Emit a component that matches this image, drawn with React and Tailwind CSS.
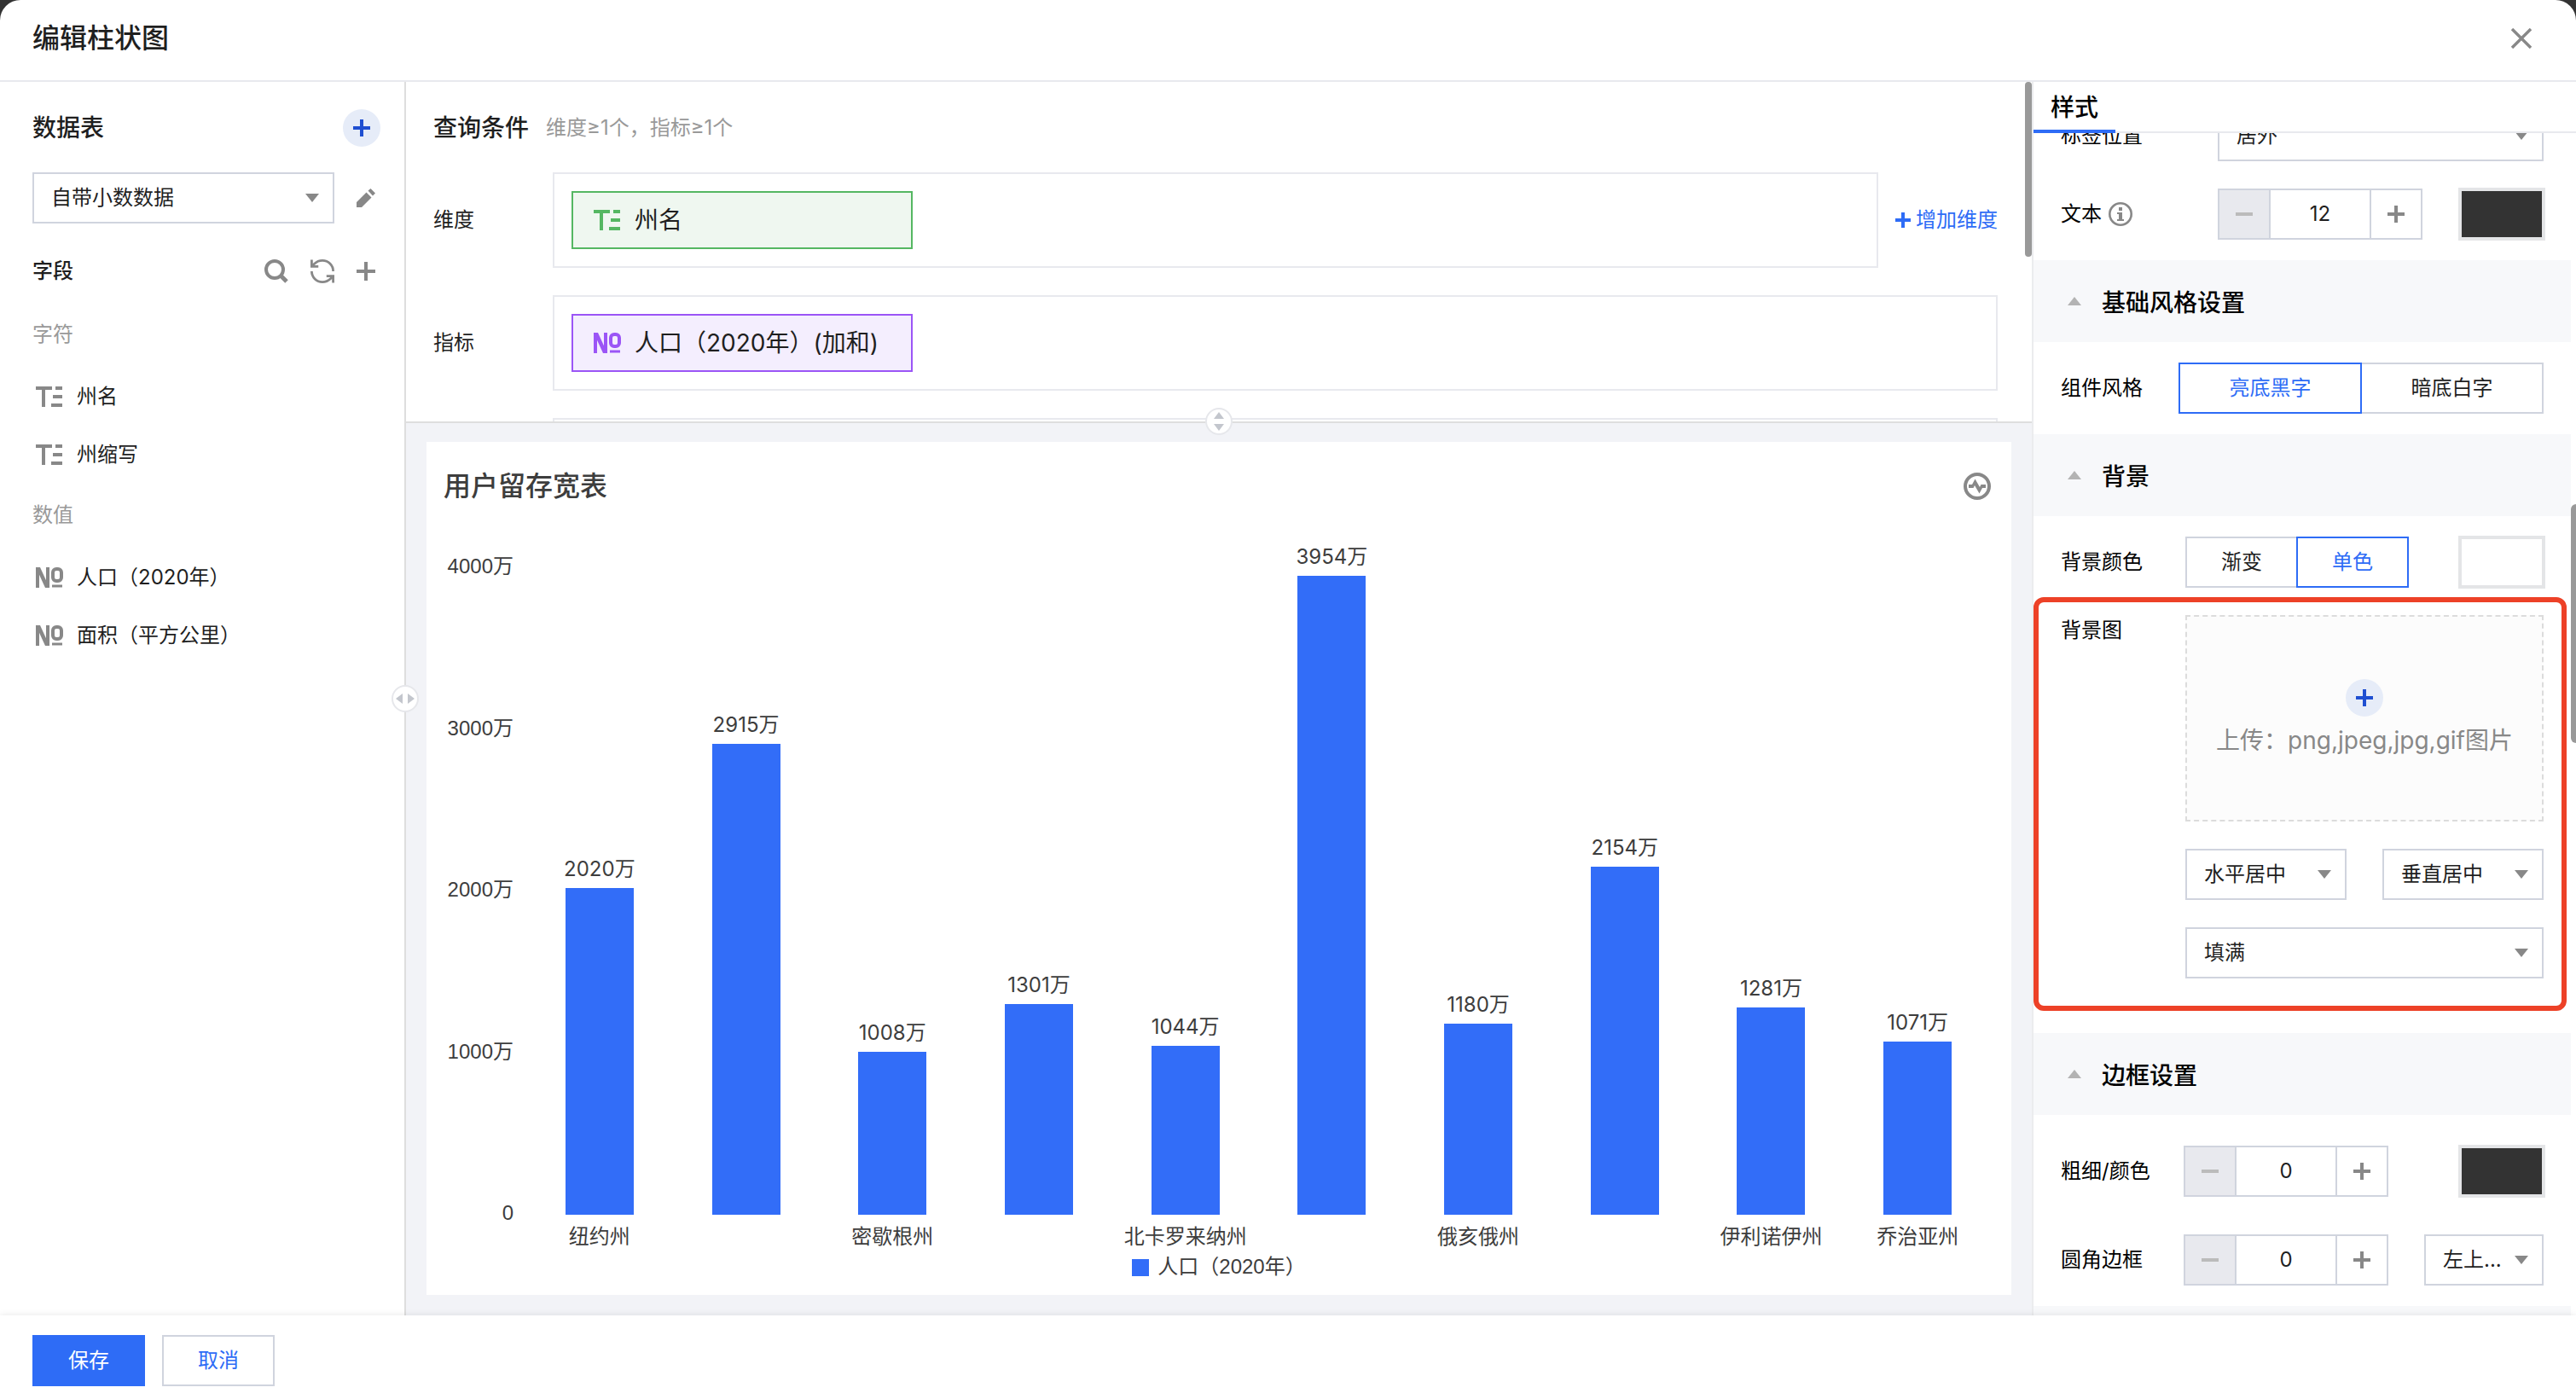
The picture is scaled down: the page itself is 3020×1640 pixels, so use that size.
import React, { useState } from "react";

const bars = [
  { name: "纽约州", value: 2020, showName: true },
  { name: "佛罗里达州", value: 2915, showName: false },
  { name: "密歇根州", value: 1008, showName: true },
  { name: "宾夕法尼亚州", value: 1301, showName: false },
  { name: "北卡罗来纳州", value: 1044, showName: true },
  { name: "加利福尼亚州", value: 3954, showName: false },
  { name: "俄亥俄州", value: 1180, showName: true },
  { name: "得克萨斯州", value: 2154, showName: false },
  { name: "伊利诺伊州", value: 1281, showName: true },
  { name: "乔治亚州", value: 1071, showName: true },
];

const AXIS_MAX = 4000;
const axisTicks = ["4000万", "3000万", "2000万", "1000万", "0"];

const TextFieldIcon = () => (
  <svg width="32" height="24" viewBox="0 0 32 24" fill="currentColor" aria-hidden="true">
    <path d="M0 0h19v4h-8v20H7V4H0zM23 0h8v4h-8zM20 10h11v4H20zM18 20h13v4H18z" />
  </svg>
);

const NumberFieldIcon = () => (
  <svg width="32" height="24" viewBox="0 0 32 24" fill="none" stroke="currentColor" aria-hidden="true">
    <path d="M2 24V0M14 24V0" strokeWidth="4" />
    <path d="M0 0h5l11 24h-5z" fill="currentColor" stroke="none" />
    <rect x="20" y="2" width="10" height="14" rx="4" strokeWidth="4" />
    <path d="M19 22h12" strokeWidth="3" />
  </svg>
);

const PlusIcon = ({ size = 22, weight = 4 }) => (
  <svg width={size} height={size} viewBox={`0 0 ${size} ${size}`} stroke="currentColor" strokeWidth={weight} aria-hidden="true">
    <path d={`M${size / 2} 0v${size}M0 ${size / 2}h${size}`} />
  </svg>
);

const MinusIcon = () => (
  <svg width="20" height="4" viewBox="0 0 20 4" fill="currentColor" aria-hidden="true">
    <path d="M0 0h20v4H0z" />
  </svg>
);

const SearchIcon = () => (
  <svg width="28" height="28" viewBox="0 0 28 28" fill="none" stroke="currentColor" aria-hidden="true">
    <circle cx="12" cy="12" r="10" strokeWidth="4" />
    <path d="M19 19l7 7" strokeWidth="5" />
  </svg>
);

const RefreshIcon = () => (
  <svg width="28" height="28" viewBox="2 2 20 20" fill="none" stroke="currentColor" strokeWidth="2" aria-hidden="true">
    <path d="M21 12a9 9 0 0 0-9-9 9.75 9.75 0 0 0-6.74 2.74L3.6 7.4M3 2.4V8h5.6" />
    <path d="M3 12a9 9 0 0 0 9 9 9.75 9.75 0 0 0 6.74-2.74L20.4 16.6M15.4 16H21v5.6" />
  </svg>
);

const PencilIcon = () => (
  <svg width="22" height="22" viewBox="0 0 22 22" fill="currentColor" aria-hidden="true">
    <path d="M0 16v6h6l11.500-11.500-6-6zM13.500 2.500 16.500 0 22 5.500l-3 3z" />
  </svg>
);

const InfoIcon = () => (
  <svg width="28" height="28" viewBox="0 0 28 28" className="text-[#888]" aria-hidden="true">
    <circle cx="14" cy="14" r="12.700" fill="none" stroke="currentColor" strokeWidth="2.600" />
    <path d="M12 6h4v4h-4zM10 12h6v8h2v2h-8v-2h2v-6h-2z" fill="currentColor" />
  </svg>
);

const PulseIcon = () => (
  <svg width="32" height="32" viewBox="0 0 32 32" aria-hidden="true">
    <circle cx="16" cy="16" r="14" fill="none" stroke="currentColor" strokeWidth="4" />
    <path d="M6 14h4l3.500-6.500L19 17l1.500-3H26v4h-4l-3.500 6.500L13 15l-1.500 3H6z" fill="currentColor" />
  </svg>
);

const AddCircle = () => (
  <span className="flex h-11 w-11 items-center justify-center rounded-full bg-[#e6ecf8] text-[#1f4fd1]">
    <PlusIcon size={20} weight={4} />
  </span>
);

const SelectBox = ({ id, label, options, className }) => (
  <div className={`relative ${className}`}>
    <select
      id={id}
      aria-label={label}
      className="h-[60px] w-full appearance-none border-2 border-[#d0d4de] bg-white pl-5 text-[#1f1f1f]"
    >
      {options.map((option) => (
        <option key={option}>{option}</option>
      ))}
    </select>
    <svg
      width="16"
      height="10"
      viewBox="0 0 16 10"
      className="pointer-events-none absolute top-1/2 right-[18px] -translate-y-1/2 text-[#888]"
      aria-hidden="true"
    >
      <path d="M0 0h16L8 10z" fill="currentColor" />
    </svg>
  </div>
);

const Stepper = ({ id, value, onChange }) => (
  <div className="flex h-[60px] w-[240px] border-2 border-[#d0d4de] bg-white">
    <button
      aria-label="减少"
      onClick={() => onChange(value - 1)}
      className="flex w-[60px] items-center justify-center border-r-2 border-[#d0d4de] bg-[#e8e9ee] text-[#bbb]"
    >
      <MinusIcon />
    </button>
    <input
      id={id}
      value={value}
      inputMode="numeric"
      onChange={(e) => onChange(Number(e.target.value) || 0)}
      className="w-0 flex-1 text-center text-[#1f1f1f]"
    />
    <button
      aria-label="增加"
      onClick={() => onChange(value + 1)}
      className="flex w-[60px] items-center justify-center border-l-2 border-[#d0d4de] text-[#888]"
    >
      <PlusIcon size={20} weight={4} />
    </button>
  </div>
);

const ColorBox = ({ label, value, onChange }) => (
  <input
    type="color"
    aria-label={label}
    value={value}
    onChange={(e) => onChange(e.target.value)}
    className="-mr-0.5 h-[62px] w-[102px] appearance-none border-4 border-[#e4e5e7] bg-white p-0 [&::-webkit-color-swatch-wrapper]:p-0 [&::-webkit-color-swatch]:rounded-none [&::-webkit-color-swatch]:border-0"
  />
);

const Segmented = ({ options, value, onChange, label, className }) => (
  <div role="group" aria-label={label} className={`flex h-[60px] ${className}`}>
    {options.map((option) => (
      <button
        key={option}
        aria-pressed={value === option}
        onClick={() => onChange(option)}
        className={
          value === option
            ? "relative flex-1 border-2 border-[#2e6cf6] text-[#2e6cf6] first:-mr-px last:-ml-px"
            : "flex-1 border-2 border-[#d0d4de] text-[#1f1f1f] first:-mr-px last:-ml-px"
        }
      >
        {option}
      </button>
    ))}
  </div>
);

const SectionHeader = ({ title }) => (
  <button className="flex h-24 w-full shrink-0 items-center gap-6 bg-[#f7f8fa] pl-10 text-[28px] font-medium text-black">
    <svg width="16" height="10" viewBox="0 0 16 10" aria-hidden="true">
      <path d="M0 10h16L8 0z" fill="#b3b3b3" />
    </svg>
    <span className="pt-1">{title}</span>
  </button>
);

const StyleRow = ({ label, htmlFor, icon, children }) => (
  <div className="flex h-[60px] items-center justify-between pr-8 pl-8 text-black">
    <label htmlFor={htmlFor} className="flex items-center gap-2">
      {label}
      {icon}
    </label>
    {children}
  </div>
);

const FieldGroup = ({ title, fields, icon }) => (
  <section>
    <h3 className="mb-[23px] h-8 text-[#999]">{title}</h3>
    <ul>
      {fields.map((field) => (
        <li key={field} className="flex h-[68px] items-center gap-4 pl-1 text-[#1f1f1f]">
          <span className="text-[#888]">{icon}</span>
          {field}
        </li>
      ))}
    </ul>
  </section>
);

const FieldPanel = () => (
  <aside className="relative w-[476px] shrink-0 border-r-2 border-[#dedede] pl-[38px]">
    <div className="mt-8 flex h-11 items-center justify-between pr-7">
      <h2 className="text-[28px] font-medium">数据表</h2>
      <button aria-label="添加数据表">
        <AddCircle />
      </button>
    </div>
    <div className="mt-[30px] flex items-center gap-[26px] pr-[34px]">
      <SelectBox id="dataset" label="数据表" options={["自带小数数据"]} className="flex-1" />
      <button aria-label="编辑数据表" className="text-[#888]">
        <PencilIcon />
      </button>
    </div>
    <div className="mt-10 flex h-8 items-center justify-between pr-[34px]">
      <h2 className="font-medium">字段</h2>
      <div className="flex items-center gap-[26px] text-[#888]">
        <button aria-label="搜索字段">
          <SearchIcon />
        </button>
        <button aria-label="刷新字段">
          <RefreshIcon />
        </button>
        <button aria-label="新增字段">
          <PlusIcon />
        </button>
      </div>
    </div>
    <div className="mt-[42px] flex flex-col gap-[21px]">
      <FieldGroup title="字符" fields={["州名", "州缩写"]} icon={<TextFieldIcon />} />
      <FieldGroup title="数值" fields={["人口（2020年）", "面积（平方公里）"]} icon={<NumberFieldIcon />} />
    </div>
    <button
      aria-label="调整宽度"
      className="absolute top-1/2 -right-[17px] z-10 flex h-8 w-8 -translate-y-1/2 items-center justify-center rounded-full border-2 border-[#e6e7eb] bg-white text-[#c3c6cd]"
    >
      <svg width="22" height="12" viewBox="0 0 22 12" fill="currentColor" aria-hidden="true">
        <path d="M0 6 8 0v12zM22 6 14 0v12z" />
      </svg>
    </button>
  </aside>
);

const QueryPanel = () => (
  <section className="relative h-[400px] shrink-0 border-b-2 border-[#dedede]">
    <div className="h-full overflow-hidden pt-8 pr-10 pl-8">
      <div className="flex h-11 items-center gap-5">
        <h2 className="text-[28px] font-medium">查询条件</h2>
        <span className="text-[#999]">维度≥1个，指标≥1个</span>
      </div>
      <div className="mt-[30px] flex items-center">
        <span className="w-[140px] shrink-0">维度</span>
        <div className="flex h-28 flex-1 items-center border-2 border-[#e8e9ee] px-5">
          <div className="flex h-[68px] w-[400px] items-center gap-4 border-2 border-[#55b762] bg-[#eff7f0] px-6 text-[28px] text-[#55b762]">
            <TextFieldIcon />
            <span className="text-[#1f1f1f]">州名</span>
          </div>
        </div>
        <button className="ml-5 flex items-center gap-1.5 text-[#2e6cf6]">
          <PlusIcon size={18} weight={4} />
          增加维度
        </button>
      </div>
      <div className="mt-8 flex items-center">
        <span className="w-[140px] shrink-0">指标</span>
        <div className="flex h-28 flex-1 items-center border-2 border-[#e8e9ee] px-5">
          <div className="flex h-[68px] w-[400px] items-center gap-4 border-2 border-[#9b55f6] bg-[#f4eefe] px-6 text-[28px] whitespace-nowrap text-[#9b55f6]">
            <NumberFieldIcon />
            <span className="text-[#1f1f1f]">人口（2020年）(加和)</span>
          </div>
        </div>
      </div>
      <div className="mt-8 ml-[140px] h-28 border-2 border-[#e8e9ee]" />
    </div>
    <div className="absolute top-0 right-0 h-[205px] w-2 rounded-full bg-[#999]" />
    <button
      aria-label="调整高度"
      className="absolute -bottom-4 left-1/2 z-10 flex h-8 w-8 -translate-x-1/2 items-center justify-center rounded-full border-2 border-[#e6e7eb] bg-white text-[#c3c6cd]"
    >
      <svg width="12" height="22" viewBox="0 0 12 22" fill="currentColor" aria-hidden="true">
        <path d="M6 0 12 8H0zM6 22l6-8H0z" />
      </svg>
    </button>
  </section>
);

const BarChartCard = () => (
  <section className="flex flex-1 flex-col bg-white text-[#3d3d3d]">
    <div className="flex h-[104px] items-center justify-between pr-6 pl-5">
      <h2 className="text-[32px] font-medium">用户留存宽表</h2>
      <button aria-label="数据监控" className="text-[#888]">
        <PulseIcon />
      </button>
    </div>
    <div className="mt-11 flex flex-1 gap-[15px] pr-6 pl-5">
      <ul className="flex w-[82px] flex-col justify-between font-['Liberation_Sans','Noto_Sans_CJK_SC',sans-serif]">
        {axisTicks.map((tick) => (
          <li key={tick} className="flex h-0 items-center justify-end">
            <span className="pb-1">{tick}</span>
          </li>
        ))}
      </ul>
      <div className="flex flex-1">
        {bars.map((bar) => (
          <div key={bar.name} className="relative flex-1">
            <div
              className="absolute bottom-0 left-1/2 w-20 -translate-x-1/2 bg-[#326df8]"
              style={{ height: `${(bar.value / AXIS_MAX) * 100}%` }}
            >
              <span className="absolute bottom-full left-1/2 mb-1.5 -translate-x-1/2 whitespace-nowrap">
                {bar.value}万
              </span>
            </div>
          </div>
        ))}
      </div>
    </div>
    <div className="flex h-[52px] items-center pr-6 pl-[117px] whitespace-nowrap">
      {bars.map((bar) => (
        <span key={bar.name} className="flex w-0 flex-1 justify-center">
          {bar.showName ? bar.name : ""}
        </span>
      ))}
    </div>
    <div className="mb-[22px] flex h-5 items-center justify-center gap-2.5 font-['Liberation_Sans','Noto_Sans_CJK_SC',sans-serif]">
      <span className="h-5 w-5 bg-[#326df8]" />
      <span className="pb-0.5">人口（2020年）</span>
    </div>
  </section>
);

const StylePanel = () => {
  const [theme, setTheme] = useState("亮底黑字");
  const [bgMode, setBgMode] = useState("单色");
  const [fontSize, setFontSize] = useState(12);
  const [borderWidth, setBorderWidth] = useState(0);
  const [radius, setRadius] = useState(0);
  const [textColor, setTextColor] = useState("#333333");
  const [bgColor, setBgColor] = useState("#ffffff");
  const [borderColor, setBorderColor] = useState("#333333");

  return (
    <aside className="relative flex w-[638px] shrink-0 flex-col border-l-2 border-[#ebecee] bg-white">
      <div className="flex h-[60px] shrink-0 border-b-2 border-[#e8e9ee]" role="tablist">
        <button
          role="tab"
          aria-selected="true"
          className="-mb-0.5 w-24 border-b-4 border-[#2e6cf6] pt-1 text-[28px] font-medium text-black"
        >
          样式
        </button>
      </div>
      <div className="h-0 flex-1 overflow-hidden pr-1.5">
        {/* list is scrolled part of the way down */}
        <div className="-mt-[27px] flex flex-col gap-8 pb-6">
          <StyleRow label="标签位置" htmlFor="label-position">
            <SelectBox id="label-position" options={["居外", "居内"]} className="w-[382px]" />
          </StyleRow>
          <StyleRow label="文本" htmlFor="font-size" icon={<InfoIcon />}>
            <div className="flex w-[382px] items-center justify-between">
              <Stepper id="font-size" value={fontSize} onChange={setFontSize} />
              <ColorBox label="文本颜色" value={textColor} onChange={setTextColor} />
            </div>
          </StyleRow>
        </div>

        <SectionHeader title="基础风格设置" />
        <div className="py-6">
          <StyleRow label="组件风格">
            <Segmented
              label="组件风格"
              options={["亮底黑字", "暗底白字"]}
              value={theme}
              onChange={setTheme}
              className="w-[428px]"
            />
          </StyleRow>
        </div>

        <SectionHeader title="背景" />
        <div className="flex flex-col gap-8 py-6">
          <StyleRow label="背景颜色">
            <div className="flex w-[420px] items-center justify-between">
              <Segmented
                label="背景颜色"
                options={["渐变", "单色"]}
                value={bgMode}
                onChange={setBgMode}
                className="w-[262px]"
              />
              <ColorBox label="背景颜色值" value={bgColor} onChange={setBgColor} />
            </div>
          </StyleRow>
          <div className="relative flex justify-between pr-8 pl-8 text-black">
            <div className="pointer-events-none absolute -top-[21px] right-[5px] -bottom-[38px] left-0 rounded-xl border-6 border-[#ed4127]" />
            <span className="mt-0.5 h-9">背景图</span>
            <div className="flex w-[420px] flex-col gap-8">
              <label className="flex h-[242px] cursor-pointer flex-col items-center justify-center gap-3 border-2 border-dashed border-[#dcdcdc] bg-[#fcfcfc] pb-1 text-[28px] text-[#888]">
                <AddCircle />
                <span>上传：png,jpeg,jpg,gif图片</span>
                <input type="file" accept=".png,.jpeg,.jpg,.gif" className="hidden" />
              </label>
              <div className="flex gap-[42px]">
                <SelectBox id="bg-x" label="水平位置" options={["水平居中", "左对齐"]} className="flex-1" />
                <SelectBox id="bg-y" label="垂直位置" options={["垂直居中", "顶对齐"]} className="flex-1" />
              </div>
              <SelectBox id="bg-fit" label="填充方式" options={["填满", "适应"]} className="w-full" />
            </div>
          </div>
        </div>
        <div className="h-10" />

        <SectionHeader title="边框设置" />
        <div className="flex flex-col gap-11 pt-9 pb-6">
          <StyleRow label="粗细/颜色" htmlFor="border-width">
            <div className="flex w-[422px] items-center justify-between">
              <Stepper id="border-width" value={borderWidth} onChange={setBorderWidth} />
              <ColorBox label="边框颜色" value={borderColor} onChange={setBorderColor} />
            </div>
          </StyleRow>
          <StyleRow label="圆角边框" htmlFor="border-radius">
            <div className="flex w-[422px] items-center justify-between">
              <Stepper id="border-radius" value={radius} onChange={setRadius} />
              <SelectBox id="corner" label="圆角位置" options={["左上...", "右上..."]} className="w-[140px]" />
            </div>
          </StyleRow>
        </div>
        <SectionHeader title="" />
      </div>
      <div className="absolute top-[495px] right-0 h-[280px] w-1.5 rounded-l-full bg-[#999]" />
    </aside>
  );
};

const App = () => {
  return (
    <div className="h-screen overflow-hidden bg-[#333]">
      <div className="flex h-full flex-col rounded-t-3xl bg-white font-['Inter','Noto_Sans_CJK_SC',sans-serif] text-[24px] leading-8 text-[#1f1f1f]">
        <header className="flex h-24 shrink-0 items-center justify-between border-b-2 border-[#e8e9ee] pr-[52px] pb-1 pl-[38px]">
          <h1 className="text-[32px] font-medium">编辑柱状图</h1>
          <button aria-label="关闭" className="text-[#888]">
            <svg width="24" height="24" viewBox="0 0 24 24" stroke="currentColor" strokeWidth="3.400" aria-hidden="true">
              <path d="M1 1l22 22M23 1 1 23" />
            </svg>
          </button>
        </header>

        <main className="flex h-0 flex-1">
          <FieldPanel />
          <div className="flex min-w-0 flex-1 flex-col">
            <QueryPanel />
            <div className="flex flex-1 bg-[#f2f3f7] pt-[22px] pr-6 pb-6 pl-6">
              <BarChartCard />
            </div>
          </div>
          <StylePanel />
        </main>

        <footer className="relative z-10 flex h-[98px] shrink-0 gap-5 bg-white pt-[23px] pl-[38px] shadow-[0_0_8px_rgba(0,0,0,0.1)]">
          <button className="h-[60px] w-[132px] bg-[#2e6cf6] text-white">保存</button>
          <button className="h-[60px] w-[132px] border-2 border-[#d0d4de] text-[#2e6cf6]">取消</button>
        </footer>
      </div>
    </div>
  );
};

export default App;
